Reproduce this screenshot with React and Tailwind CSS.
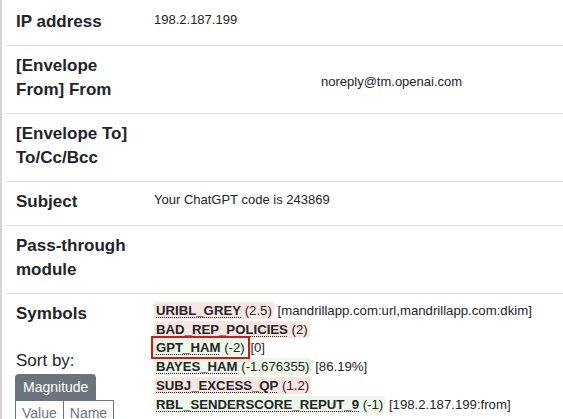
import React from 'react';

const rows = [
  { label: 'IP address', value: '198.2.187.199' },
  { label: '[Envelope From] From', value: 'noreply@tm.openai.com', from: true },
  { label: '[Envelope To] To/Cc/Bcc', value: '' },
  { label: 'Subject', value: 'Your ChatGPT code is 243869' },
  { label: 'Pass-through module', value: '' },
];

const symbols = [
  { name: 'URIBL_GREY', score: '2.5', opts: '[mandrillapp.com:url,mandrillapp.com:dkim]', pos: true },
  { name: 'BAD_REP_POLICIES', score: '2', pos: true },
  { name: 'GPT_HAM', score: '-2', opts: '[0]', pos: false, marked: true },
  { name: 'BAYES_HAM', score: '-1.676355', opts: '[86.19%]', pos: false },
  { name: 'SUBJ_EXCESS_QP', score: '1.2', pos: true },
  { name: 'RBL_SENDERSCORE_REPUT_9', score: '-1', opts: '[198.2.187.199:from]', pos: false },
];

function Label({ children }) {
  return (
    <div className="w-[148px] shrink-0 pl-[10px] pr-[13px] text-[17px] leading-[24px] font-bold text-[#212529]">
      {children}
    </div>
  );
}

export default function App() {
  return (
    <div className="w-[563px] h-[419px] overflow-hidden bg-white" style={{ fontFamily: '"Liberation Sans", Arial, sans-serif' }}>
      <div className="h-full border-l-2 border-[#d4d4d4] pl-[4px] pt-[2px]">
        {rows.map((r) => (
          <div key={r.label} className="flex border-b border-[#dee2e6] pt-[8px] pb-[11px]">
            <Label>{r.label}</Label>
            <div className={`text-[13px] leading-[20px] text-[#212529] ${r.from ? 'pl-[167px] pt-[18px]' : ''}`}>
              {r.value}
            </div>
          </div>
        ))}

        {/* Symbols */}
        <div className="flex pt-[8px]">
          <div className="w-[148px] shrink-0 pl-[10px] text-[#212529]">
            <div className="text-[17px] leading-[24px] font-bold">Symbols</div>
            <div className="mt-[23px] text-[17px] leading-[24px]">Sort by:</div>
            <div className="mt-[1px] flex flex-col items-start -ml-[1px]">
              <button className="h-[26px] px-[8px] bg-[#6c757d] text-white text-[14px] rounded-t-[4px]">Magnitude</button>
              <div className="flex">
                <button className="h-[26px] px-[6px] border border-[#6c757d] text-[#6c757d] text-[14px] bg-white">Value</button>
                <button className="h-[26px] px-[6px] border border-l-0 border-[#6c757d] text-[#6c757d] text-[14px] bg-white rounded-br-[4px]">Name</button>
              </div>
            </div>
          </div>
          <div className="text-[13.2px] leading-[18.7px] text-[#212529]">
            {symbols.map((s) => (
              <div key={s.name} className="whitespace-nowrap">
                <span
                  className={`px-[2px] py-px ${s.pos ? 'bg-[#fbe5e1]' : 'bg-[#edf7e7]'} ${
                    s.marked ? 'outline-[2.5px] outline-offset-[1px] outline-[#e3120b]' : 'rounded-[3px]'
                  }`}
                >
                  <span className="font-bold underline decoration-dotted decoration-1 underline-offset-[2px]">{s.name}</span>{' '}
                  ({s.score})
                </span>
                {s.opts && <span> {s.opts}</span>}
              </div>
            ))}
          </div>
        </div>
      </div>
    </div>
  );
}
